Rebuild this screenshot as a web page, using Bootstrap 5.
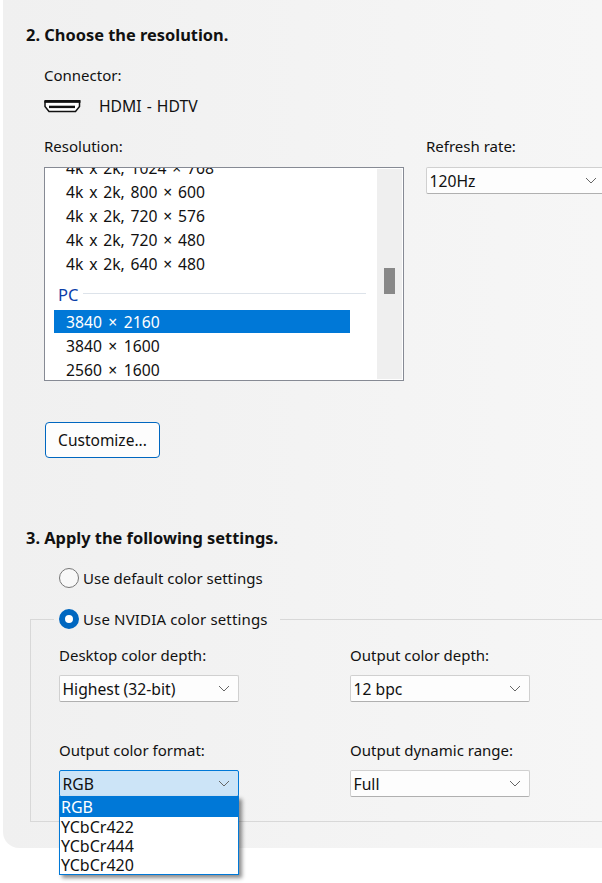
<!DOCTYPE html>
<html lang="en">
<head>
<meta charset="utf-8">
<title>Resolution settings</title>
<link href="https://cdn.jsdelivr.net/npm/bootstrap@5.3.0/dist/css/bootstrap.min.css" rel="stylesheet">
<style>
html,body{margin:0;background:#fff;overflow:hidden}
body{width:602px;height:883px;font-family:"Noto Sans","Open Sans","Liberation Sans",sans-serif;font-size:15px;line-height:20px;color:#111}
.panel-main{margin-left:3px;width:599px;height:848px;background:linear-gradient(90deg,#f0f0f0,#f6f6f6);border-bottom-left-radius:16px;padding:25px 0 0 23px;position:relative}
.step-title{font-size:16.4px;font-weight:700;line-height:20px;margin:0}
.field-label{margin:0;line-height:20px}
.indent-a{margin-left:18px}
.connector-row{margin-top:11px;height:20px;gap:18px;font-size:15.7px;word-spacing:1px}
.res-row{margin-top:20px;gap:22px}
.listbox-col{width:360px}
.refresh-col{width:200px}
.listbox{margin-top:11px;width:360px;height:214px;background:#fff;border:1px solid #868a94;overflow:hidden;position:relative}
.listbox-inner{margin-top:-12px;padding-left:9px;width:305px;font-size:15.7px;word-spacing:1.7px}
.opt-row{height:24px;line-height:24px;padding-left:12px;width:296px}
.opt-sel{background:#0078d7;color:#fff;height:23px;line-height:24px;margin-bottom:1px;word-spacing:2.4px}
.opt-num{word-spacing:2.4px}
.opt-group{height:22px;margin-top:8px;margin-bottom:4px;width:312px;color:#0b3ea8;font-size:16.5px;line-height:20px;padding-left:4px;gap:5px;align-items:center}
.opt-group i{display:block;flex:1;height:1px;background:#dde3ea;margin-top:-3px}
.scroll-track{position:absolute;top:1px;right:1px;bottom:1px;width:25px;background:#efefef}
.scroll-thumb{position:absolute;left:7px;top:99px;width:11px;height:26px;background:#888}
.win-select.form-select{display:block;width:180px;height:27px;padding:0 0 0 2.5px;font-family:inherit;font-size:15.7px;line-height:24px;color:#111;background-color:#fdfdfd;border:1px solid #d0d0d0;border-bottom-color:#b0b0b0;border-radius:2px;background-image:url("data:image/svg+xml,%3Csvg xmlns='http://www.w3.org/2000/svg' width='12' height='7'%3E%3Cpath d='M1 1l5 5 5-5' fill='none' stroke='%23666' stroke-width='1'/%3E%3C/svg%3E");background-position:right 8px center;background-size:12px 7px;box-shadow:none}
.refresh-select.form-select{margin-top:11px}
.open-select.form-select{background-color:#cce4f7;border-color:#0078d7}
.btn-customize.btn{display:block;margin:41px 0 0 1px;width:115px;height:36px;padding:0;font-size:15.5px;line-height:33px;color:#111;background:#fdfdfd;border:1px solid #0067c0;border-radius:4px}
.step-three{margin-top:70px}
.radio-line{margin:0;padding:0;min-height:0;height:24px;gap:4px;align-items:center}
.radio-line .form-check-input{float:none;margin:0;width:20px;height:20px;flex:none;background-color:#f8f8f8;border:1px solid #777;background-image:none}
.radio-line .form-check-input:checked{background-color:#fff;border:6px solid #0067c0;background-image:none}
.default-radio{margin:18px 0 0 33px}
.group-box{margin:17px 0 0 4px;width:580px;height:215px;min-height:0;border:1px solid #d8d8d8;border-right:0;padding:0 0 0 28px;position:relative}
.group-box legend{float:none;width:auto;margin:0 0 0 -5px;padding:0 12px 0 5px;font-size:15px;line-height:20px;height:24px;letter-spacing:.15px}
.select-grid{display:grid;grid-template-columns:291px 200px;row-gap:38px;margin-top:14px}
.select-grid .field-label{margin-bottom:10px}
.combo-drop{position:absolute;left:28px;top:165px;width:180px;height:79px;background:#fff;border:1px solid #0078d7;box-shadow:3px 3px 4px rgba(0,0,0,.45);z-index:3;font-size:16px}
.drop-item{padding-left:1px;height:19px;line-height:21px}
.drop-sel{background:#0078d7;color:#fff;height:20px}
</style>
</head>
<body>
<div class="panel-main">
  <h2 class="step-title">2. Choose the resolution.</h2>
  <div class="indent-a">
    <p class="field-label mt-3 pt-1">Connector:</p>
    <div class="connector-row d-flex align-items-center">
      <svg width="37" height="13" viewBox="0 0 37 13" aria-hidden="true"><path d="M1 1.500H35.500V6.500L31.500 11.500H5L1 6.500Z" fill="#fff" stroke="#111" stroke-width="1.500"/><rect x="0.500" width="36" height="2.800" fill="#111"/><rect x="5" y="5.700" width="26" height="2.400" fill="#111"/></svg>
      <span>HDMI - HDTV</span>
    </div>
    <div class="res-row d-flex">
      <div class="listbox-col">
        <p class="field-label">Resolution:</p>
        <div class="listbox">
          <div class="listbox-inner">
            <div class="opt-row">4k x 2k, 1024 × 768</div>
            <div class="opt-row">4k x 2k, 800 × 600</div>
            <div class="opt-row">4k x 2k, 720 × 576</div>
            <div class="opt-row">4k x 2k, 720 × 480</div>
            <div class="opt-row">4k x 2k, 640 × 480</div>
            <div class="opt-group d-flex"><span>PC</span><i></i></div>
            <div class="opt-row opt-sel">3840 × 2160</div>
            <div class="opt-row opt-num">3840 × 1600</div>
            <div class="opt-row opt-num">2560 × 1600</div>
          </div>
          <div class="scroll-track"><div class="scroll-thumb"></div></div>
        </div>
      </div>
      <div class="refresh-col">
        <p class="field-label">Refresh rate:</p>
        <select class="form-select win-select refresh-select" aria-label="Refresh rate"><option>120Hz</option></select>
      </div>
    </div>
    <button type="button" class="btn btn-customize">Customize...</button>
  </div>
  <h2 class="step-title step-three">3. Apply the following settings.</h2>
  <div class="form-check radio-line default-radio d-flex">
    <input class="form-check-input" type="radio" name="colorset" id="r1">
    <label for="r1">Use default color settings</label>
  </div>
  <fieldset class="group-box">
    <legend>
      <span class="form-check radio-line d-flex">
        <input class="form-check-input" type="radio" name="colorset" id="r2" checked>
        <label for="r2">Use NVIDIA color settings</label>
      </span>
    </legend>
    <div class="select-grid">
      <div><p class="field-label">Desktop color depth:</p><select class="form-select win-select" aria-label="Desktop color depth"><option>Highest (32-bit)</option></select></div>
      <div><p class="field-label">Output color depth:</p><select class="form-select win-select" aria-label="Output color depth"><option>12 bpc</option></select></div>
      <div><p class="field-label">Output color format:</p><select class="form-select win-select open-select" aria-label="Output color format"><option>RGB</option></select></div>
      <div><p class="field-label">Output dynamic range:</p><select class="form-select win-select" aria-label="Output dynamic range"><option>Full</option></select></div>
    </div>
    <div class="combo-drop">
      <div class="drop-item drop-sel">RGB</div>
      <div class="drop-item">YCbCr422</div>
      <div class="drop-item">YCbCr444</div>
      <div class="drop-item">YCbCr420</div>
    </div>
  </fieldset>
</div>
<script src="https://cdn.jsdelivr.net/npm/bootstrap@5.3.0/dist/js/bootstrap.bundle.min.js"></script>
</body>
</html>
